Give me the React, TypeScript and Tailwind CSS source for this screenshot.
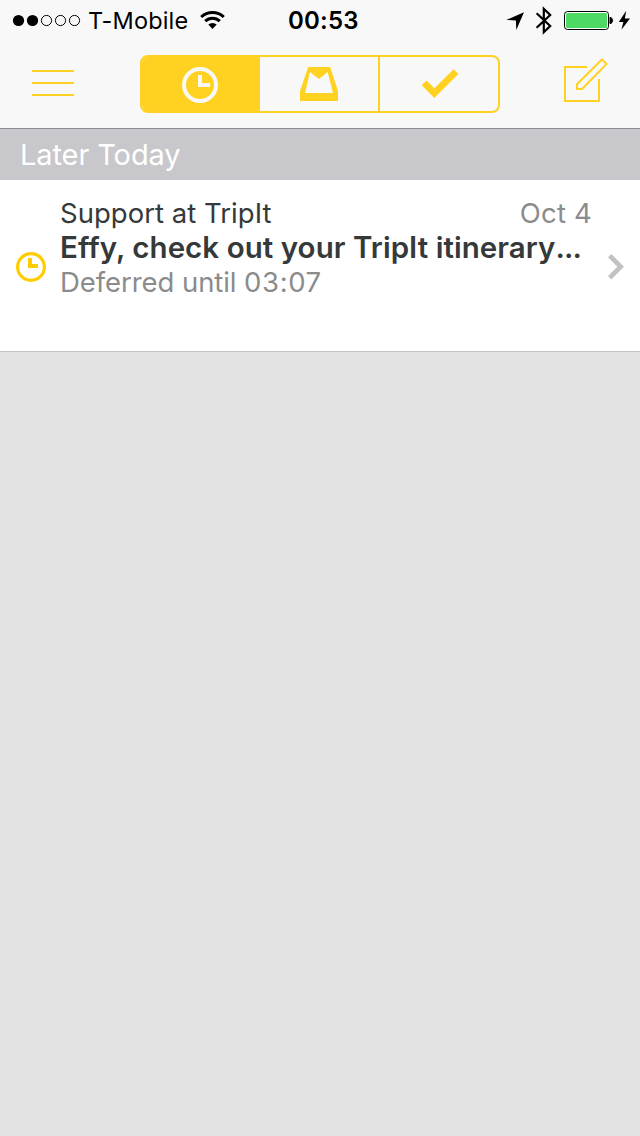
import React from 'react';

function SignalDots() {
  return (
    <svg width="72" height="40" viewBox="10 0 72 40">
      <circle cx="18.5" cy="20.5" r="5.6" />
      <circle cx="32.5" cy="20.5" r="5.6" />
      {[46.5, 60.5, 74.5].map((x) => (
        <circle key={x} cx={x} cy="20.5" r="5.1" fill="none" stroke="#000" strokeWidth="1" />
      ))}
    </svg>
  );
}

function Wifi() {
  return (
    <svg width="26" height="40" viewBox="200 0 26 40" fill="none" stroke="#000">
      <path d="M201.2 17A16.2 16.2 0 0 1 223.8 17" strokeWidth="3" />
      <path d="M205.2 21.2A10.5 10.5 0 0 1 219.8 21.2" strokeWidth="3" />
      <path d="M208.3 24.6A6.2 6.2 0 0 1 216.7 24.6L212.5 29Z" fill="#000" stroke="none" />
    </svg>
  );
}

function StatusIcons() {
  return (
    <svg width="134" height="40" viewBox="506 0 134 40">
      <path d="M524 12.2L516.3 30L515.9 20.4L506.3 19.9Z" />
      <path
        d="M536.6 13.2L550.2 26L543.8 32.2V8.8L550.2 15L536.6 27.8"
        fill="none"
        stroke="#000"
        strokeWidth="2.2"
      />
      <rect x="564.5" y="11.5" width="44" height="18" rx="3" fill="#fff" stroke="#000" />
      <rect x="566" y="13" width="41" height="15" rx="1.5" fill="#4cd964" />
      <path d="M610 17.2A3.4 3.4 0 0 1 610 23.8Z" stroke="#000" strokeWidth="1" />
      <path d="M626.2 10.8L618.8 22H623.4L621.4 29.8L630 18.6H624.8Z" />
    </svg>
  );
}

function StatusBar() {
  return (
    <div className="flex h-10 shrink-0 items-center pl-2.5 text-[24px] text-black">
      <SignalDots />
      <div className="ml-[6px] w-[112px] whitespace-nowrap pt-0.5 text-[23.5px] leading-[38px] tracking-[0.15px]">
        T-Mobile
      </div>
      <Wifi />
      <div className="ml-[62px] w-[218px] whitespace-nowrap pt-0.5 leading-[38px] font-semibold tracking-[0.2px]">
        00:53
      </div>
      <StatusIcons />
    </div>
  );
}

function NavBar() {
  return (
    <div className="flex h-[88px] shrink-0 items-center pl-8">
      <div className="mb-0.5 flex w-[42px] shrink-0 flex-col gap-2.5">
        <div className="h-0.5 bg-[#ffd221]" />
        <div className="h-0.5 bg-[#ffd221]" />
        <div className="h-0.5 bg-[#ffd221]" />
      </div>
      <div className="ml-[66px] flex h-[58px] w-[360px] shrink-0 overflow-hidden rounded-lg border-2 border-[#ffd221]">
        <div className="w-[118px] shrink-0 bg-[#ffd221]">
          <svg width="118" height="54" viewBox="142 57 118 54">
            <circle cx="200" cy="85" r="16" fill="none" stroke="#f8f8f8" strokeWidth="4" />
            <path d="M198 75H202V83H210V87H198Z" fill="#f8f8f8" />
          </svg>
        </div>
        <div className="w-[120px] shrink-0 border-r-2 border-[#ffd221]">
          <svg width="118" height="54" viewBox="260 57 118 54">
            <path
              d="M308.2 67H330.2L338 91V101H300V91ZM310 72L305 93H333L327.7 72L319 79Z"
              fill="#ffd221"
              fillRule="evenodd"
            />
          </svg>
        </div>
        <div className="w-[118px] shrink-0">
          <svg width="118" height="54" viewBox="380 57 118 54">
            <path d="M421.7 85.3L426.6 80.6L434.3 88.3L453.7 69.2L458.4 74L434.3 98Z" fill="#ffd221" />
          </svg>
        </div>
      </div>
      <svg
        className="ml-[62px] shrink-0"
        width="48"
        height="52"
        viewBox="562 58 48 52"
        fill="none"
        stroke="#ffd221"
        strokeWidth="2"
      >
        <path d="M587 67H565V101H599V79" />
        <path d="M577 89V84.2L602 59.5L606.5 64L582 89Z" />
      </svg>
    </div>
  );
}

function MessageRow() {
  return (
    <div className="flex h-[172px] shrink-0 border-b border-[#c3c3c5] bg-white pl-4">
      <svg className="mt-[70px] shrink-0" width="32" height="34" viewBox="16 250 32 34">
        <circle cx="31" cy="267" r="13.4" fill="none" stroke="#ffcc00" strokeWidth="3.2" />
        <path d="M28 258H32V264H38V268H28Z" fill="#ffcc00" />
      </svg>
      <div className="ml-3 w-[532px] shrink-0 pt-4 text-[27.5px]">
        <div className="flex h-[34px] justify-between leading-[34px]">
          <span className="tracking-[0.03px] text-[#35393a]">Support at TripIt</span>
          <span className="tracking-[0.2px] text-[#8b8b8b]">Oct 4</span>
        </div>
        <div className="h-[35px] whitespace-nowrap text-[29.5px] leading-[35px] font-semibold tracking-[0.05px] text-[#35393a]">
          Effy, check out your TripIt itinerary<span className="tracking-[-0.9px]">...</span>
        </div>
        <div className="h-[34px] leading-[34px] tracking-[-0.07px] text-[#8b8b8b]">
          Deferred until <span className="tracking-[0.6px]">03:07</span>
        </div>
      </div>
      <svg className="mt-[70px] ml-[14px] shrink-0" width="20" height="34" viewBox="606 250 20 34">
        <path d="M608 257.3L611.3 254L624 266.7L611.3 279.4L608 276.1L617.4 266.7Z" fill="#c2c2c2" />
      </svg>
    </div>
  );
}

export default function App() {
  return (
    <div className="flex h-[1136px] w-[640px] flex-col overflow-hidden bg-[#e3e3e3] font-['Inter','Liberation_Sans',sans-serif]">
      <header className="flex shrink-0 flex-col border-b border-[#8c8c92] bg-[#f8f8f8]">
        <StatusBar />
        <NavBar />
      </header>
      <div className="h-[51px] shrink-0 bg-[#c8c7cc] pl-5 text-[29px] leading-[51px] tracking-[-0.1px] text-white">
        Later Today
      </div>
      <MessageRow />
    </div>
  );
}
